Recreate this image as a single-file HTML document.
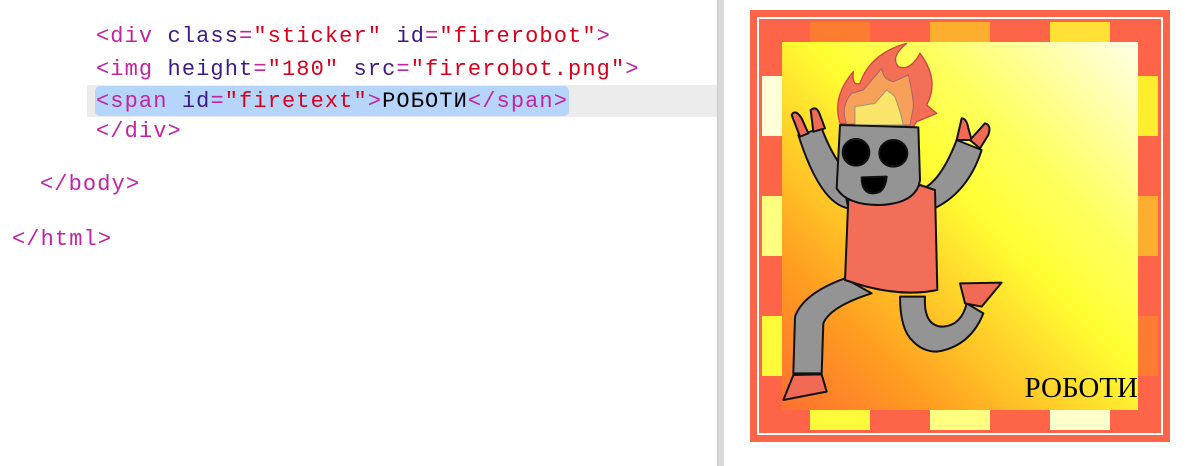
<!DOCTYPE html>
<html><head><meta charset="utf-8"><style>
body{margin:0;width:1192px;height:466px;background:#fff;position:relative;overflow:hidden}
.code{position:absolute;font-family:"Liberation Mono",monospace;font-size:22px;letter-spacing:1.1px;white-space:pre;line-height:30px}
.t{color:#c4239f}.a{color:#3e1a88}.s{color:#d8001c}.k{color:#000}
.abs{position:absolute}
</style></head><body>
<div class="abs" style="left:87px;top:85px;width:630px;height:32px;background:#ececec"></div>
<div class="abs" style="left:95px;top:86px;width:474px;height:30px;background:#b5d5fb;border-radius:5px"></div>
<div class="abs" style="left:717px;top:0;width:6px;height:466px;background:#d9d9d9;border-left:1px solid #c8c8c8"></div>
<div class="code" style="left:96px;top:22px"><span class="t">&lt;div </span><span class="a">class</span><span class="t">=</span><span class="s">"sticker"</span> <span class="a">id</span><span class="t">=</span><span class="s">"firerobot"</span><span class="t">&gt;</span></div>
<div class="code" style="left:96px;top:55px"><span class="t">&lt;img </span><span class="a">height</span><span class="t">=</span><span class="s">"180"</span> <span class="a">src</span><span class="t">=</span><span class="s">"firerobot.png"</span><span class="t">&gt;</span></div>
<div class="code" style="left:96px;top:87px"><span class="t">&lt;span </span><span class="a">id</span><span class="t">=</span><span class="s">"firetext"</span><span class="t">&gt;</span><span class="k">РОБОТИ</span><span class="t">&lt;/span&gt;</span></div>
<div class="code" style="left:96px;top:117px"><span class="t">&lt;/div&gt;</span></div>
<div class="code" style="left:40px;top:170px"><span class="t">&lt;/body&gt;</span></div>
<div class="code" style="left:12px;top:225px"><span class="t">&lt;/html&gt;</span></div>

<div class="abs" style="left:750px;top:10px;width:420px;height:432px;background:#fe6448"></div>
<div class="abs" style="left:757px;top:17px;width:402px;height:414px;border:2px solid #fff"></div>
<div class="abs" style="left:762px;top:22px;width:396px;height:408px;background:#fe6448;overflow:hidden">
<div class="abs" style="left:48px;top:0;width:60px;height:20px;background:#fc7d32"></div>
<div class="abs" style="left:168px;top:0;width:60px;height:20px;background:#fdae2e"></div>
<div class="abs" style="left:288px;top:0;width:60px;height:20px;background:#ffe034"></div>
<div class="abs" style="left:48px;top:388px;width:60px;height:20px;background:#fffb3a"></div>
<div class="abs" style="left:168px;top:388px;width:60px;height:20px;background:#ffff80"></div>
<div class="abs" style="left:288px;top:388px;width:60px;height:20px;background:#ffffcc"></div>
<div class="abs" style="left:0;top:54px;width:20px;height:60px;background:#ffffd8"></div>
<div class="abs" style="left:0;top:174px;width:20px;height:60px;background:#ffff80"></div>
<div class="abs" style="left:0;top:294px;width:20px;height:60px;background:#fffb3a"></div>
<div class="abs" style="left:376px;top:54px;width:20px;height:60px;background:#ffee2e"></div>
<div class="abs" style="left:376px;top:174px;width:20px;height:60px;background:#fdae2e"></div>
<div class="abs" style="left:376px;top:294px;width:20px;height:60px;background:#fc7d32"></div>
<div class="abs" style="left:20px;top:20px;width:356px;height:368px;background:linear-gradient(45deg,#ff7030 0%,#ffa020 22%,#ffff33 55%,#ffff60 70%,#ffffe8 100%)"></div>
</div>
<svg class="abs" style="left:780px;top:40px" width="230" height="370" viewBox="0 0 690 1110">
<g stroke="#111" stroke-width="6" stroke-linejoin="round">
<path d="M180,250 Q155,170 220,95 Q215,140 240,130 Q270,40 380,10 Q330,50 355,80 Q390,95 420,40 Q480,120 440,195 L470,220 L410,245 L400,260 Z" fill="#f36f55" stroke="#c44" stroke-width="4"/>
<path d="M200,252 Q180,200 215,160 L250,150 L305,85 Q310,120 340,125 L385,105 Q400,170 400,200 L390,255 Z" fill="#f6a05a" stroke="#a66" stroke-width="3"/>
<path d="M225,255 L225,200 L285,190 L320,150 L345,170 L360,215 L370,255 Z" fill="#fbe46a" stroke="#997" stroke-width="3"/>
<path d="M55,285 L125,265 Q150,330 178,370 L205,505 Q120,490 55,285 Z" fill="#949494"/>
<path d="M35,225 Q45,205 65,235 L85,280 L60,290 Z" fill="#f06a55"/>
<path d="M92,210 Q110,195 120,225 L135,265 L100,275 Z" fill="#f06a55"/>
<path d="M420,450 Q480,430 530,300 L605,330 Q560,470 440,515 Z" fill="#949494"/>
<path d="M530,300 L545,235 Q560,235 565,265 L575,300 Z" fill="#f06a55"/>
<path d="M570,300 L615,250 Q635,255 625,285 L600,325 Z" fill="#f06a55"/>
<path d="M195,715 Q70,760 45,830 L40,1000 L125,1000 L130,850 Q150,800 275,760 Z" fill="#949494"/>
<path d="M40,1005 L125,1003 L140,1055 L10,1080Z" fill="#f06a55"/>
<path d="M360,770 Q360,870 400,905 Q430,935 470,935 Q570,920 610,820 L560,790 Q545,855 490,860 Q430,860 435,770 Z" fill="#949494"/>
<path d="M540,730 L665,728 L605,800 L555,790Z" fill="#f06a55"/>
<path d="M205,475 Q330,510 420,435 L465,450 L472,750 Q350,775 195,720 Z" fill="#f26e58"/>
<path d="M180,255 L415,262 L420,420 Q410,490 300,495 Q200,495 170,445 Z" fill="#949494"/>
<ellipse cx="228" cy="337" rx="40" ry="40" fill="#000"/>
<ellipse cx="340" cy="340" rx="42" ry="40" fill="#000"/>
<path d="M245,412 L320,410 Q315,460 280,460 Q245,460 245,412Z" fill="#000"/>
</g></svg>
<div class="abs" style="left:990px;top:372px;width:148px;text-align:right;font-family:'Liberation Serif',serif;font-size:29px;color:#000">РОБОТИ</div>
</body></html>
